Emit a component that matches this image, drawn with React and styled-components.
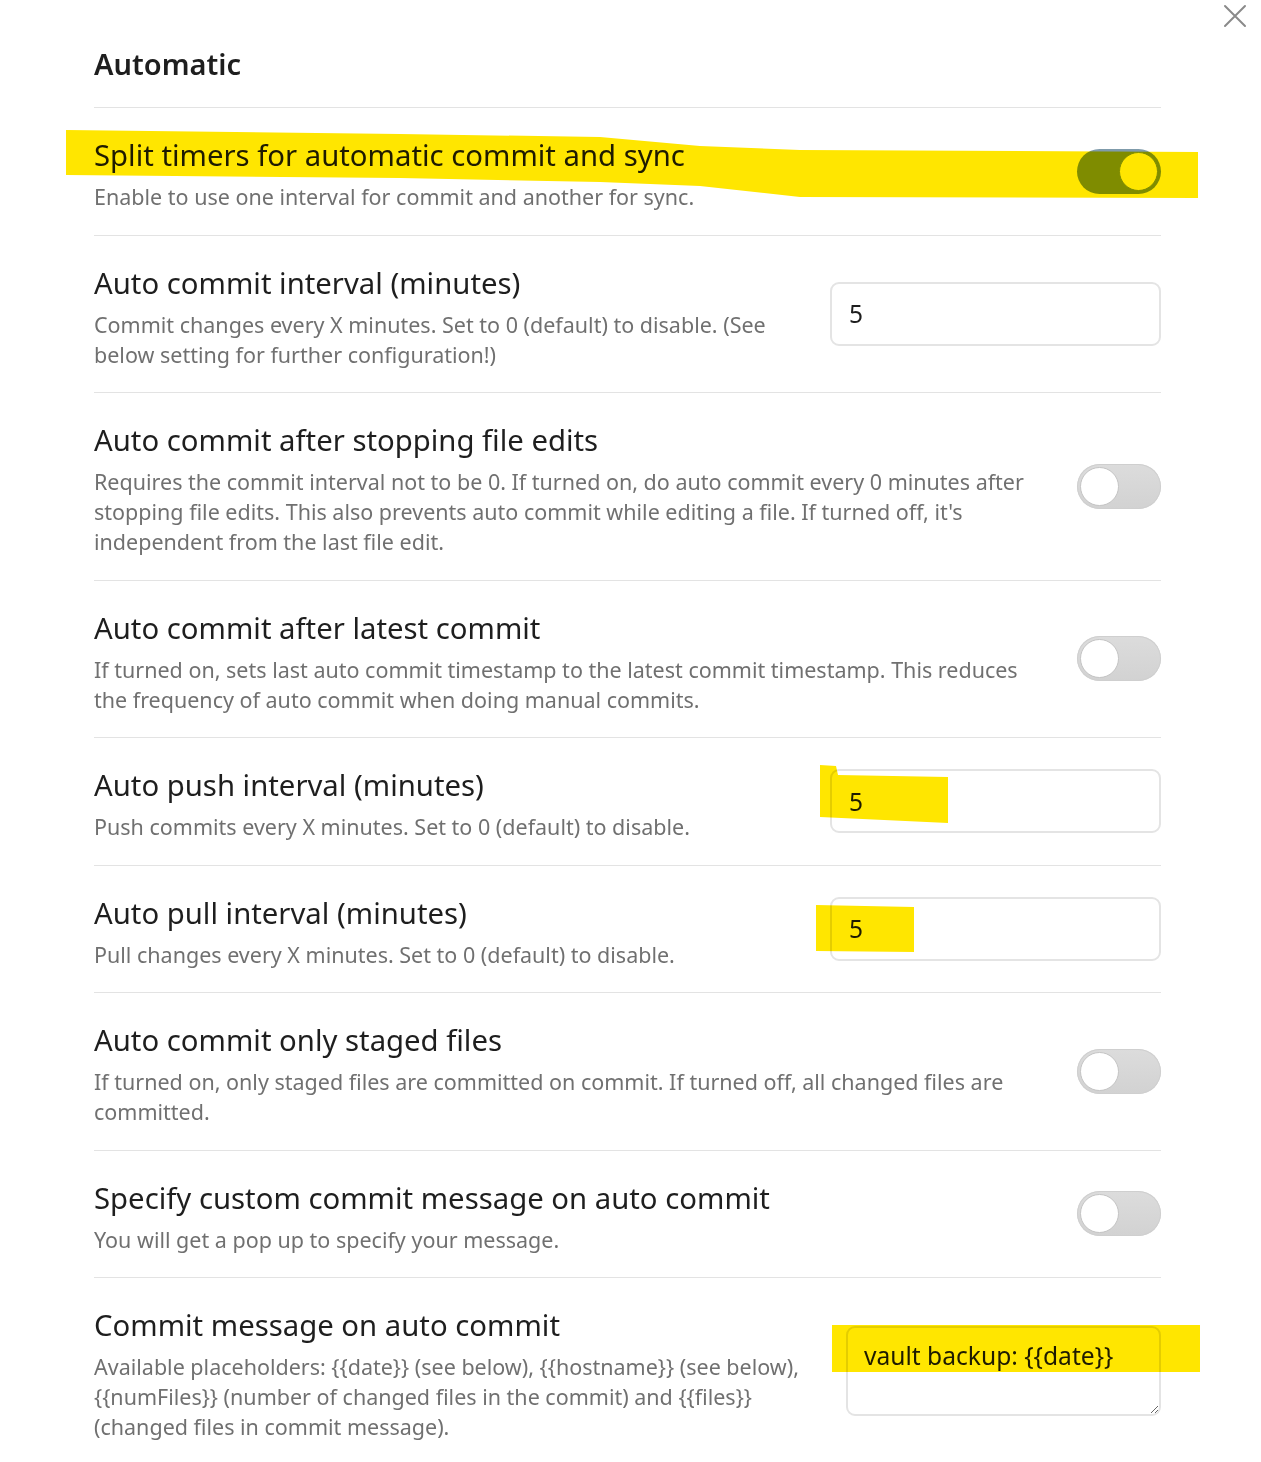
import React from 'react'
import styled, { createGlobalStyle } from 'styled-components'

const GlobalStyle = createGlobalStyle`
  html, body {
    margin: 0;
    padding: 0;
    background: #fff;
  }
  body {
    font-family: "Noto Sans", "Open Sans", sans-serif;
    color: #222;
  }
`

const SETTINGS = [
  { name: 'Split timers for automatic commit and sync', desc: ['Enable to use one interval for commit and another for sync.'], control: 'toggle', on: true },
  { name: 'Auto commit interval (minutes)', desc: ['Commit changes every X minutes. Set to 0 (default) to disable. (See', 'below setting for further configuration!)'], control: 'input', value: '5' },
  { name: 'Auto commit after stopping file edits', desc: ['Requires the commit interval not to be 0. If turned on, do auto commit every 0 minutes after', "stopping file edits. This also prevents auto commit while editing a file. If turned off, it's", 'independent from the last file edit.'], control: 'toggle' },
  { name: 'Auto commit after latest commit', desc: ['If turned on, sets last auto commit timestamp to the latest commit timestamp. This reduces', 'the frequency of auto commit when doing manual commits.'], control: 'toggle' },
  { name: 'Auto push interval (minutes)', desc: ['Push commits every X minutes. Set to 0 (default) to disable.'], control: 'input', value: '5' },
  { name: 'Auto pull interval (minutes)', desc: ['Pull changes every X minutes. Set to 0 (default) to disable.'], control: 'input', value: '5' },
  { name: 'Auto commit only staged files', desc: ['If turned on, only staged files are committed on commit. If turned off, all changed files are', 'committed.'], control: 'toggle' },
  { name: 'Specify custom commit message on auto commit', desc: ['You will get a pop up to specify your message.'], control: 'toggle' },
  { name: 'Commit message on auto commit', desc: ['Available placeholders: {{date}} (see below), {{hostname}} (see below),', '{{numFiles}} (number of changed files in the commit) and {{files}}', '(changed files in commit message).'], control: 'textarea', value: 'vault backup: {{date}}' },
]

// marker strokes drawn over the screenshot
const MARKS = [
  '66,130 400,134 600,137 700,146 800,150 1198,152 1198,198 800,197 700,186 600,182 400,178 66,175',
  '820,765 836,766 838,775 948,777 948,823 820,817',
  '816,905 914,907 914,952 816,951',
  '832,1325 1200,1325 1200,1372 832,1372',
]

const Page = styled.div`
  position: relative;
  isolation: isolate;
  background: #fff;
  width: 1261px;
  min-height: 1462px;
  box-sizing: border-box;
  padding: 0 100px 0 94px;
`

const Close = styled.button`
  position: absolute;
  top: 4px;
  right: 14px;
  width: 24px;
  height: 24px;
  padding: 0;
  border: 0;
  background: none;
  color: #8a8a8a;
  cursor: pointer;
`

const Heading = styled.h2`
  margin: 0;
  padding: 46px 0 25px;
  font-size: 29px;
  line-height: 36px;
  font-weight: 600;
  color: #1e1e1e;
`

const Item = styled.div`
  display: flex;
  align-items: center;
  gap: 40px;
  padding: 22.5px 0;
  border-top: 1px solid #e3e3e3;
`

const Info = styled.div`
  flex: 1;
  min-width: 0;
  padding-top: 6.5px;
`

const Name = styled.div`
  font-size: 29.3px;
  line-height: 36px;
  color: #1e1e1e;
  margin-bottom: 9px;
`

const Desc = styled.div`
  font-size: 21.5px;
  line-height: 30px;
  color: #707070;
  white-space: nowrap;
`

const Control = styled.div`
  flex: none;
  display: flex;
  justify-content: flex-end;
`

const Toggle = styled.div`
  position: relative;
  width: 84px;
  height: 45px;
  border-radius: 23px;
  box-sizing: border-box;
  background: ${p => (p.$on ? '#7f9bab' : 'linear-gradient(#dcdcdc, #d2d2d2)')};
  box-shadow: ${p => (p.$on ? 'none' : 'inset 0 0 0 1px #cfcfcf')};

  &::after {
    content: '';
    position: absolute;
    top: 3px;
    left: ${p => (p.$on ? '42px' : '3px')};
    width: 39px;
    height: 39px;
    border-radius: 50%;
    box-sizing: border-box;
    background: #fff;
    border: 1px solid ${p => (p.$on ? '#7f9bab' : '#c4c4c4')};
  }
`

const TextInput = styled.input`
  width: 331px;
  height: 64px;
  box-sizing: border-box;
  border: 2px solid #e4e4e4;
  border-radius: 9px;
  padding: 0 17px;
  font-family: inherit;
  font-size: 24.5px;
  color: #1e1e1e;
  background: #fff;
  outline: none;
`

const TextArea = styled.textarea`
  width: 315px;
  height: 90px;
  box-sizing: border-box;
  border: 2px solid #e4e4e4;
  border-radius: 9px;
  padding: 12px 16px;
  font-family: inherit;
  font-size: 24.6px;
  line-height: 32px;
  color: #1e1e1e;
  background: #fff;
  outline: none;
  resize: vertical;
`

const Marks = styled.svg`
  position: absolute;
  top: 0;
  left: 0;
  pointer-events: none;
  mix-blend-mode: multiply;
`

const renderControl = s => {
  if (s.control === 'toggle') return <Toggle $on={s.on} />
  if (s.control === 'input') return <TextInput type="text" defaultValue={s.value} />
  return <TextArea defaultValue={s.value} />
}

export default function App() {
  return (
    <Page>
      <GlobalStyle />
      <Close aria-label="Close">
        <svg width="24" height="24" viewBox="0 0 24 24" fill="none" stroke="currentColor" strokeWidth="2" strokeLinecap="round">
          <path d="M2 2 22 22 M22 2 2 22" />
        </svg>
      </Close>
      <Heading>Automatic</Heading>
      {SETTINGS.map((s, idx) => (
        <Item key={idx}>
          <Info>
            <Name>{s.name}</Name>
            {s.desc.map((line, i) => (
              <Desc key={i}>{line}</Desc>
            ))}
          </Info>
          <Control>{renderControl(s)}</Control>
        </Item>
      ))}
      <Marks width="1261" height="1462" viewBox="0 0 1261 1462">
        {MARKS.map((pts, i) => (
          <polygon key={i} points={pts} fill="#ffe600" />
        ))}
      </Marks>
    </Page>
  )
}
